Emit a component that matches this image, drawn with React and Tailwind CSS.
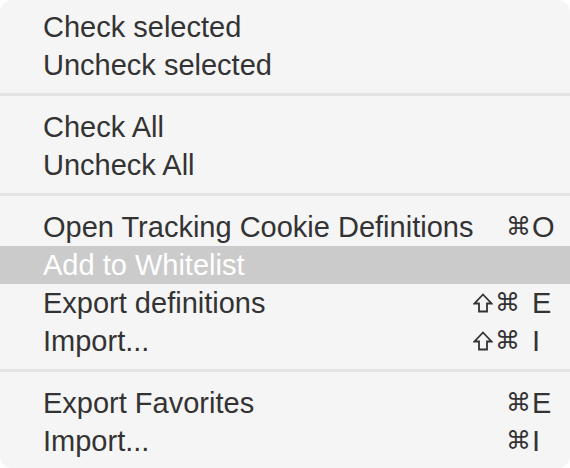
import React from "react";

const rows = [
  { t: "item", label: "Check selected" },
  { t: "item", label: "Uncheck selected" },
  { t: "sep" },
  { t: "item", label: "Check All" },
  { t: "item", label: "Uncheck All" },
  { t: "sep" },
  { t: "item", label: "Open Tracking Cookie Definitions", key: "O" },
  { t: "item", label: "Add to Whitelist", hl: true },
  { t: "item", label: "Export definitions", key: "E", shift: true },
  { t: "item", label: "Import...", key: "I", shift: true },
  { t: "sep" },
  { t: "item", label: "Export Favorites", key: "E" },
  { t: "item", label: "Import...", key: "I" },
];

function Shift() {
  return (
    <svg width="20" height="20" viewBox="0 0 20 20" className="mr-[2px]">
      <path
        d="M10 1.5 L18.5 10.5 L14 10.5 L14 18.5 L6 18.5 L6 10.5 L1.5 10.5 Z"
        fill="none"
        stroke="#333333"
        strokeWidth="1.8"
        strokeLinejoin="miter"
      />
    </svg>
  );
}

function Row({ r }) {
  return (
    <div
      className={
        "flex h-[38px] items-center pl-[43px] pr-[16px] " +
        (r.hl ? "bg-[#cbcbcb] text-white" : "text-[#333333]")
      }
    >
      <span className="flex-1 whitespace-nowrap">{r.label}</span>
      {r.key && (
        <span className="flex items-center">
          {r.shift && <Shift />}
          <span
            className={
              "text-[25px] leading-[38px] font-['DejaVu_Sans',sans-serif] " +
              (r.shift ? "mr-[12px]" : "mr-[1px]")
            }
          >
            ⌘
          </span>
          <span className="w-[22px]">{r.key}</span>
        </span>
      )}
    </div>
  );
}

export default function App() {
  return (
    <div className="w-[570px] h-[468px] bg-white">
      <div className="h-full w-full rounded-[12px] bg-[#f5f5f5] pt-[8px] pb-[8px] font-['Liberation_Sans',Arial,sans-serif] text-[29px] leading-[38px]">
        {rows.map((r, i) =>
          r.t === "sep" ? (
            <div key={i} className="h-[24px] pt-[9px]">
              <div className="h-[3px] bg-[#e3e3e3]" />
            </div>
          ) : (
            <Row key={i} r={r} />
          )
        )}
      </div>
    </div>
  );
}
